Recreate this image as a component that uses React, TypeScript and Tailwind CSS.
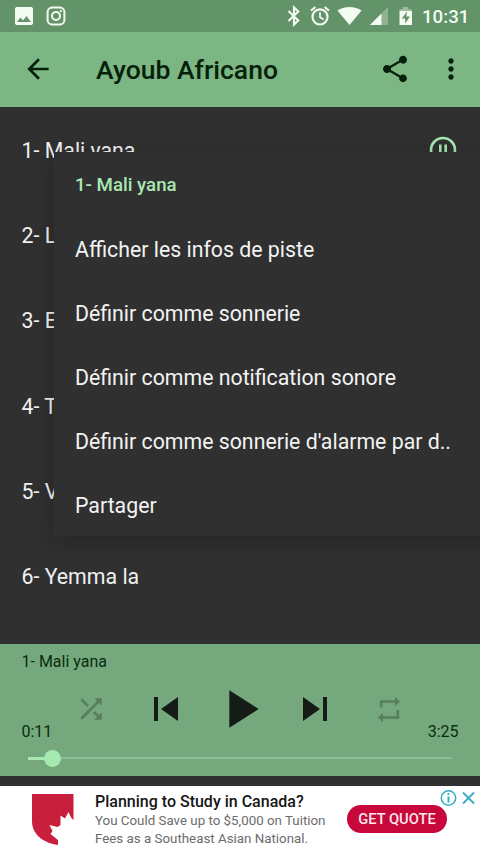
import React from "react";
import {
  MdArrowBack,
  MdMoreVert,
  MdPhoto,
  MdPlayArrow,
  MdShare,
  MdShuffle,
  MdSkipNext,
  MdSkipPrevious,
} from "react-icons/md";

const tracks = ["1- Mali yana", "2- L", "3- E", "4- T", "5- V", "6- Yemma la"];

const actions = [
  "Afficher les infos de piste",
  "Définir comme sonnerie",
  "Définir comme notification sonore",
  "Définir comme sonnerie d'alarme par d..",
  "Partager",
];

function StatusBar() {
  return (
    <div className="flex h-8 shrink-0 items-center bg-[#629369] text-[#f4fbf1]">
      <MdPhoto className="ml-3 size-6" />
      <svg className="ml-[10px] size-5" viewBox="0 0 20 20" fill="none" stroke="currentColor" strokeWidth="2">
        <rect x="1.6" y="1.6" width="16.8" height="16.8" rx="4.5" />
        <circle cx="10" cy="10" r="4" />
        <circle cx="14.8" cy="5.2" r="1.1" fill="currentColor" stroke="none" />
      </svg>
      <svg
        className="ml-[216px] size-6"
        viewBox="0 0 24 24"
        fill="none"
        stroke="currentColor"
        strokeWidth="2.100"
      >
        <path d="M6.500 7 16.300 16.500 12 20.500V3.500L16.300 7.500 6.500 17" />
      </svg>
      <svg
        className="ml-[3px] size-[22px]"
        viewBox="0 0 24 24"
        fill="none"
        stroke="currentColor"
        strokeWidth="2.300"
      >
        <circle cx="12" cy="13" r="8.200" />
        <path d="M12 8v5.300l4 2.400" strokeWidth="1.900" />
        <path d="M2.200 6.200 7 2.200M21.800 6.200 17 2.200" />
      </svg>
      <svg className="ml-[6px] h-5 w-[25px]" viewBox="0 0 24 20" preserveAspectRatio="none" fill="currentColor">
        <path d="M12 19 .4 4.6C3.6 2.2 7.600 1 12 1s8.400 1.200 11.600 3.600Z" />
      </svg>
      <svg className="ml-[7px] size-5" viewBox="0 0 20 20" fill="currentColor">
        <path d="M19 1v18H1Z" opacity=".3" />
        <path d="M12.500 7.500V19H1Z" />
      </svg>
      <svg className="ml-[10px] h-5 w-[14px]" viewBox="0 0 14 20">
        <path d="M4 1h5v2h3.500v3H.500V3H4Z" fill="#f4fbf1" opacity=".4" />
        <path d="M.500 5h12.500v14H.500Z" fill="#f4fbf1" />
        <path d="M8 5.500 2.800 12.500h3.400V17.500L11 10.500H7.500Z" fill="#629369" />
      </svg>
      <span className="ml-[9px] pt-px text-[18.67px] leading-8 font-medium whitespace-nowrap">10:31</span>
    </div>
  );
}

function Toolbar() {
  return (
    <div className="flex h-[75px] shrink-0 items-center bg-[#7cb683] text-[#06210b]">
      <MdArrowBack className="mb-px ml-[21.500px] size-8" />
      <h1 className="ml-[42.500px] flex-1 pt-px text-[26.500px] font-medium whitespace-nowrap">Ayoub Africano</h1>
      <MdShare className="mr-[24px] mb-px size-8" />
      <MdMoreVert className="mr-[13.500px] mb-px size-8" />
    </div>
  );
}

function PauseRing() {
  return (
    <svg className="size-7" viewBox="0 0 28 28" fill="none" stroke="#a5e8b0" strokeWidth="2.600">
      <circle cx="14" cy="14" r="12" />
      <path d="M11.300 8.500v11M16.700 8.500v11" />
    </svg>
  );
}

function Player() {
  return (
    <div className="flex h-[132px] shrink-0 flex-col bg-[#75a97d] text-[#0a2c10]">
      <div className="mt-[8px] ml-[21.500px] text-base leading-5">1- Mali yana</div>
      <div className="mt-[5px] flex h-16 items-center text-[#151c17]">
        <MdShuffle className="ml-[75px] size-8 opacity-30" />
        <MdSkipPrevious className="ml-[34.500px] size-12" />
        <MdPlayArrow className="ml-[18.500px] size-16" />
        <MdSkipNext className="ml-[18.500px] size-12" />
        <svg
          className="ml-[35.500px] size-8 opacity-30"
          viewBox="0 0 32 32"
          fill="none"
          stroke="currentColor"
          strokeWidth="2.700"
        >
          <path d="M7.200 14.500V8.500H22M23.800 17v7.500H9" />
          <path d="m21 3.800 5 4.700-5 4.700ZM9 19.800l-5 4.700 5 4.700Z" fill="currentColor" stroke="none" />
        </svg>
      </div>
      <div className="-mt-[19px] flex justify-between px-[21.500px] text-base leading-5">
        <span>0:11</span>
        <span>3:25</span>
      </div>
      <div className="mt-[8px] mr-[28px] ml-[28px] flex h-4 items-center">
        <span className="h-[3px] w-4 bg-[#a4eab0]" />
        <span className="size-[17px] rounded-full bg-[#a4eab0]" />
        <span className="h-[2px] flex-1 bg-[#8fbd96]" />
      </div>
    </div>
  );
}

function Ad() {
  return (
    <div className="relative flex h-[67px] shrink-0 bg-white">
      <svg className="mt-[7px] ml-[31px] h-[54px] w-[44px]" viewBox="0 0 44 54">
        <path
          d="M1 1h41.500v26L40 24.500 37.500 19 34 25.500 29.500 22.500 29.500 32 26.500 34 18.500 32 21.500 38 19.500 41 27 47V52C13 50 1 42 1 28Z"
          fill="#c8203c"
        />
      </svg>
      <div className="mt-[6px] ml-[20px] w-[252px] whitespace-nowrap">
        <div className="text-[16px] leading-5 font-medium text-[#161616]">Planning to Study in Canada?</div>
        <div className="text-[13.330px] leading-[17.500px] text-[#6c6c6c]">
          You Could Save up to $5,000 on Tuition
          <br />
          Fees as a Southeast Asian National.
        </div>
      </div>
      <button className="mt-[19px] h-7 w-[100px] rounded-full bg-[#c8073a] pt-px text-[14.700px] leading-[27px] font-medium whitespace-nowrap text-[#ffe8ec]">
        GET QUOTE
      </button>
      <svg
        className="absolute top-[3px] right-[4px] h-[18px] w-9"
        viewBox="0 0 36 18"
        fill="none"
        stroke="#36adc3"
        strokeWidth="1.500"
      >
        <circle cx="8.500" cy="9" r="7.200" />
        <path d="M8.500 7.500v6M8.500 4.300v1.800" strokeWidth="2" />
        <path d="m23 3.500 11 11M34 3.500 23 14.500" strokeWidth="1.800" />
      </svg>
    </div>
  );
}

export default function App() {
  return (
    <div className="flex h-[853px] w-[480px] flex-col overflow-hidden bg-[#303030] font-['Roboto',sans-serif]">
      <StatusBar />
      <Toolbar />
      <div className="relative h-[537px] shrink-0 overflow-hidden">
        {tracks.map((track, i) => (
          <div
            key={track}
            className="flex h-[85.330px] items-center justify-between pr-[23.500px] pl-[21.500px] text-[21.330px] text-[#f1f1f1]"
          >
            <span className="pt-[2px]">{track}</span>
            {i === 0 && <PauseRing />}
          </div>
        ))}
        <div className="absolute top-[45px] left-[54px] h-[384px] w-[440px] bg-[#303030] pl-[21px] whitespace-nowrap shadow-[0_6px_20px_2px_rgba(0,0,0,0.2)]">
          <div className="flex h-16 items-center pt-[2px] text-[18.670px] font-medium text-[#a8e8b0]">1- Mali yana</div>
          {actions.map((action) => (
            <div key={action} className="flex h-16 items-center pt-[3px] text-[21.300px] text-[#f3f3f3]">
              {action}
            </div>
          ))}
        </div>
      </div>
      <Player />
      <div className="h-[10px] shrink-0 bg-[#303030]" />
      <Ad />
    </div>
  );
}
